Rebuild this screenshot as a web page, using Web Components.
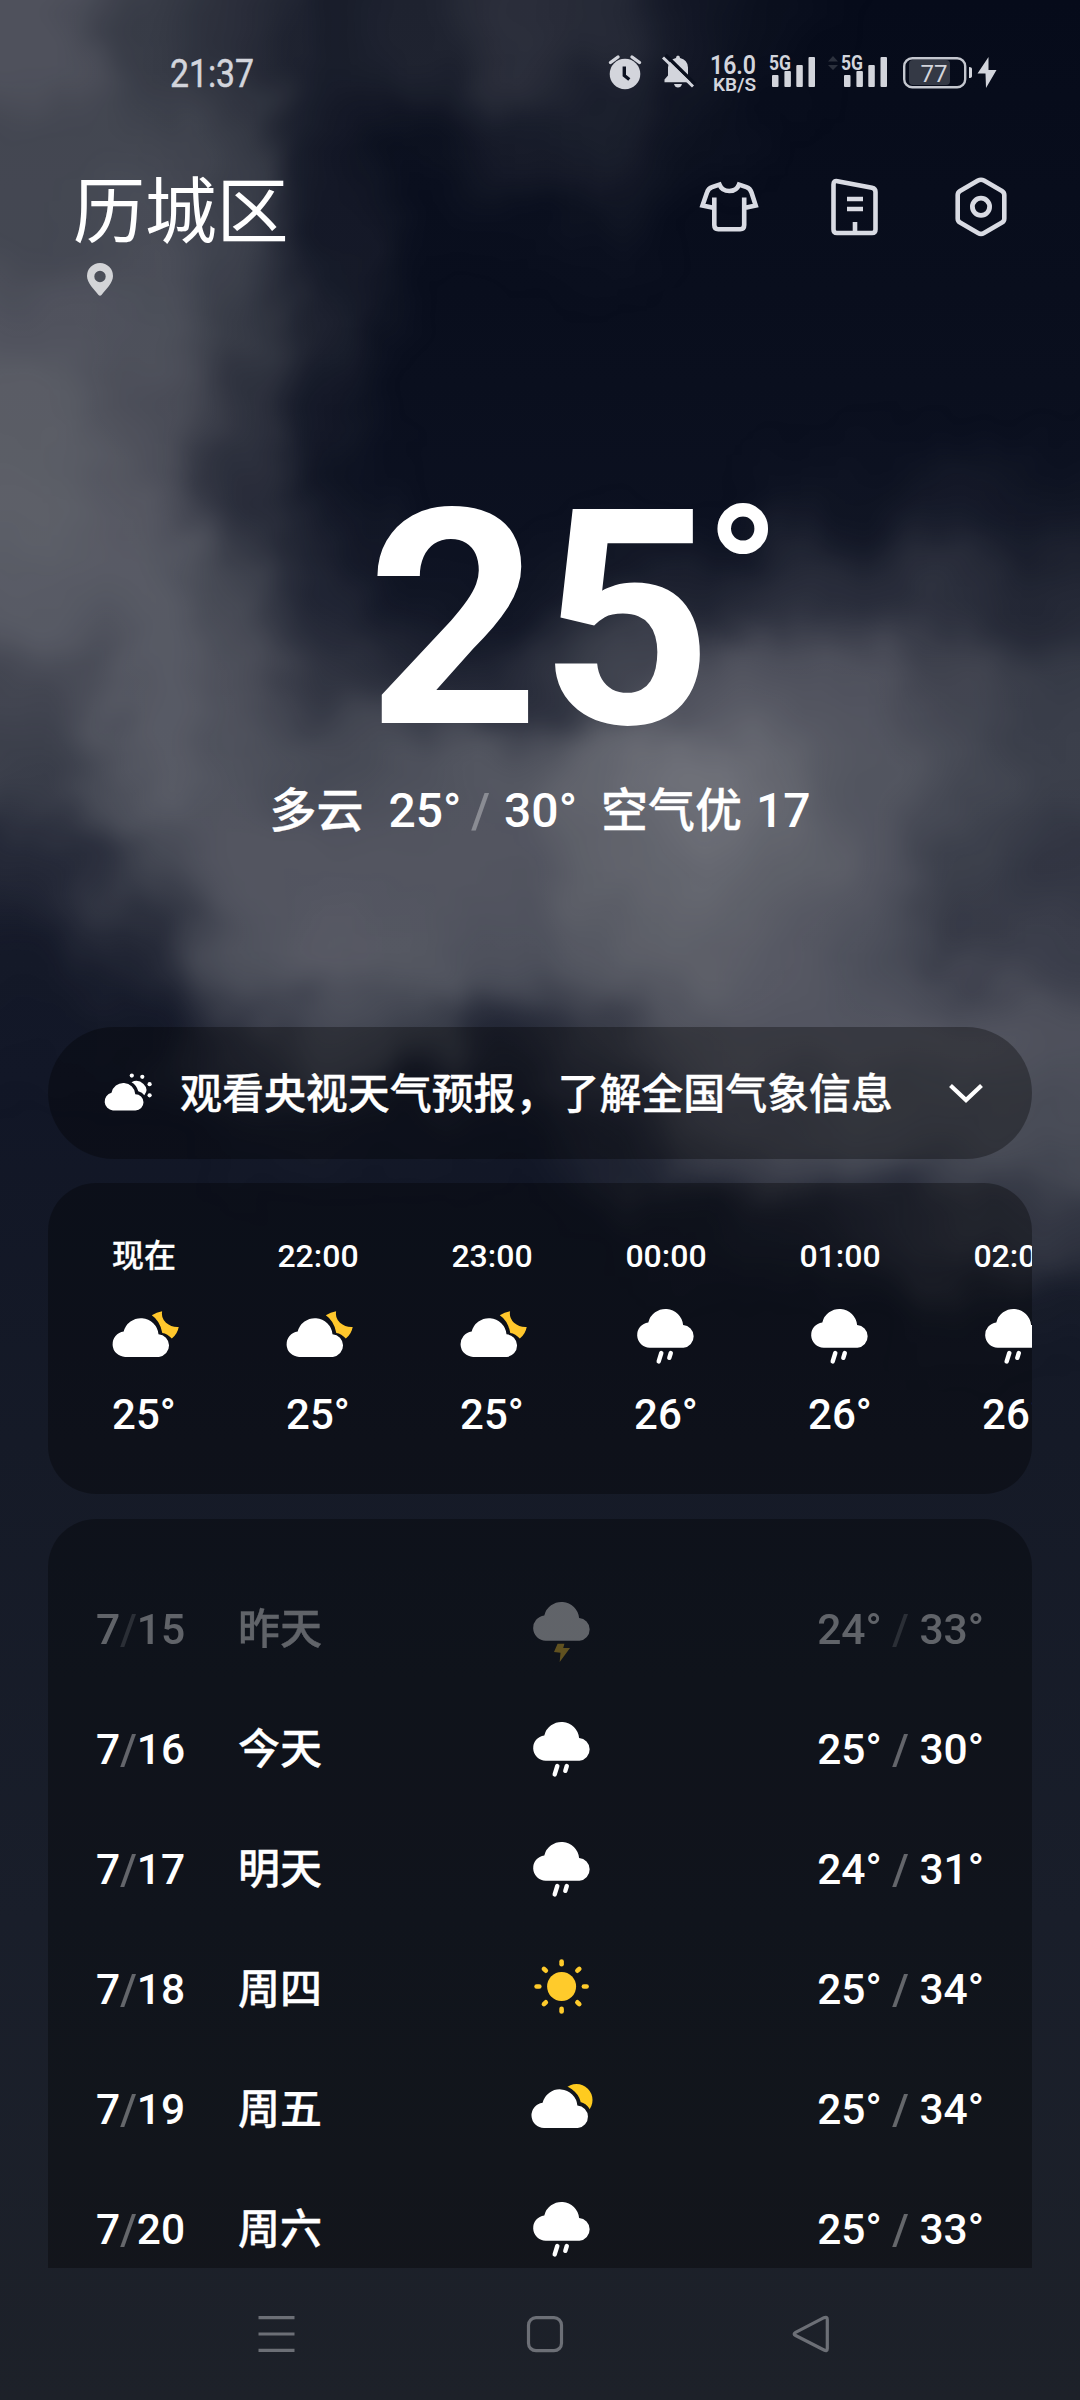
<!DOCTYPE html>
<html lang="zh-CN">
<head>
<meta charset="utf-8">
<title>历城区 天气</title>
<style>
html,body{margin:0;padding:0;background:#0a0f1e}
body{width:1080px;height:2400px;overflow:hidden;font-family:Roboto,"Noto Sans CJK SC",sans-serif;color:#fff;font-weight:500}
</style>
</head>
<body>
<weather-app>
  <status-bar time="21:37" speed="16.0" unit="KB/S" battery="77"></status-bar>
  <city-header>历城区</city-header>
  <current-weather temp="25" sky="多云" low="25°" high="30°" air="空气优" aqi="17"></current-weather>
  <forecast-banner>观看央视天气预报，了解全国气象信息</forecast-banner>
  <hourly-forecast>
    <hour-cell icon="moon" temp="25°" zh>现在</hour-cell>
    <hour-cell icon="moon" temp="25°">22:00</hour-cell>
    <hour-cell icon="moon" temp="25°">23:00</hour-cell>
    <hour-cell icon="rain" temp="26°">00:00</hour-cell>
    <hour-cell icon="rain" temp="26°">01:00</hour-cell>
    <hour-cell icon="rain" temp="26°">02:00</hour-cell>
  </hourly-forecast>
  <daily-forecast>
    <day-row month="7" day="15" icon="thunder" low="24°" high="33°" past>昨天</day-row>
    <day-row month="7" day="16" icon="rain" low="25°" high="30°">今天</day-row>
    <day-row month="7" day="17" icon="rain" low="24°" high="31°">明天</day-row>
    <day-row month="7" day="18" icon="sun" low="25°" high="34°">周四</day-row>
    <day-row month="7" day="19" icon="partly" low="25°" high="34°">周五</day-row>
    <day-row month="7" day="20" icon="rain" low="25°" high="33°">周六</day-row>
  </daily-forecast>
  <nav-bar slot="nav"></nav-bar>
</weather-app>
<script>
const define = (name, render) => customElements.define(name, class extends HTMLElement {
  constructor() { super(); this.attachShadow({ mode: 'open' }); }
  connectedCallback() { this.shadowRoot.innerHTML = render(n => this.getAttribute(n) ?? ''); }
});

// Cloud density in tenths, one value per 90px cell of the sky.
const density = [
  [6, 4, 3, 1.5, 2, 3, 2.6, 1, .4, 0, 0, 0],
  [5, 5, 4, 1, .3, 1.2, 1.6, .5, 0, 0, 0, 0],
  [5, 5.5, 4.4, 1, .1, .1, .2, 0, 0, 0, 0, 0],
  [6, 5.8, 4, 1.6, 0, 0, 0, 0, 0, 0, 0, 0],
  [6.8, 5.6, 3, .8, 0, 0, 0, 0, 0, 0, 0, 0],
  [7, 6.4, 2.6, .3, 0, 0, 0, 0, .2, .4, .8, .5],
  [6.6, 6.6, 5, 1.8, .3, .3, .6, 1.4, 2.4, 2.4, 2.6, 2],
  [4.6, 6.6, 5.6, 3, 1.6, 2.4, 4, 6, 6, 6, 4.6, 3.6],
  [4, 6.6, 5.8, 5, 5.8, 6.2, 7.4, 8.6, 7.6, 6.2, 5, 4],
  [1.8, 4.8, 6, 6, 6, 6, 7, 7.6, 7, 6, 4, 3],
  [.4, 1.6, 5.8, 6.4, 6.2, 5.4, 6.2, 7, 6.4, 5.4, 3.4, 3.8],
  [.2, .3, 2.6, 4.4, 4, 1.4, 3.4, 5.6, 6, 6, 6, 5.6],
  [0, 0, .3, .3, .2, .1, 1.2, 3.4, 4.6, 5, 5, 5],
  [0, 0, 0, 0, 0, 0, 0, .3, .8, 1.8, 2.8, 2.8],
  [0, 0, 0, 0, 0, 0, 0, 0, 0, 0, .1, .3]
];
const cells = [];
for (let r = -1; r < density.length; r++) for (let c = -1; c <= 12; c++) {
  const v = density[Math.max(r, 0)][Math.min(Math.max(c, 0), 11)];
  if (v) cells.push(`<path d="M${c * 90} ${r * 90}h90v90h-90z" fill-opacity="${(v / 10).toFixed(2)}"/>`);
}
define('cloud-sky', () => `
<style>:host{display:block;width:1080px;height:2400px}svg{display:block}</style>
<svg width="1080" height="2400" viewBox="0 0 1080 2400">
  <defs>
    <linearGradient id="night" x1="0" y1="0" x2="0" y2="1">
      <stop offset="0" stop-color="#060b1a"/><stop offset=".16" stop-color="#0a0f1e"/>
      <stop offset=".3" stop-color="#0e1323"/><stop offset=".45" stop-color="#111626"/>
      <stop offset=".6" stop-color="#151a27"/><stop offset=".8" stop-color="#191e2a"/>
      <stop offset="1" stop-color="#1d2129"/>
    </linearGradient>
    <filter id="soft" filterUnits="userSpaceOnUse" x="-90" y="-90" width="1260" height="1530" color-interpolation-filters="sRGB">
      <feGaussianBlur stdDeviation="24" result="b"/>
      <feTurbulence type="fractalNoise" baseFrequency=".009" numOctaves="3" seed="7" result="n"/>
      <feDisplacementMap in="b" in2="n" scale="100" xChannelSelector="R" yChannelSelector="G"/>
      <feGaussianBlur stdDeviation="7"/>
    </filter>
  </defs>
  <rect width="1080" height="2400" fill="url(#night)"/>
  <g filter="url(#soft)" fill="#808188" shape-rendering="crispEdges"><g transform="translate(14 8)">${cells.join('')}</g></g>
</svg>`);

define('weather-app', () => `
<style>
:host{display:grid;grid-template-columns:1080px;width:1080px;height:2400px;overflow:hidden}
cloud-sky,.page{grid-area:1/1}
.page{z-index:1;display:flex;flex-direction:column;height:2400px;min-width:0}
.scroll{height:2268px;overflow:hidden;display:flex;flex-direction:column}
</style>
<cloud-sky></cloud-sky>
<div class="page"><div class="scroll"><slot></slot></div><slot name="nav"></slot></div>`);

const bars = `<g fill="#d3d5dc"><rect x="3" y="22" width="6.5" height="12" rx="1"/><rect x="15.4" y="18" width="6.5" height="16" rx="1"/><rect x="27.3" y="12" width="6.5" height="22" rx="1"/><rect x="39.5" y="4" width="6.5" height="30" rx="1"/></g>
<text x="0" y="17.3" font-size="21" font-weight="700" textLength="22" lengthAdjust="spacingAndGlyphs">5G</text>`;
define('status-bar', a => `
<style>
:host{display:flex;height:146px;box-sizing:border-box;padding:53px 0 0 170px;align-items:flex-start;flex:none}
svg{display:block;flex:none;overflow:visible;fill:#d3d5dc;font-family:Roboto,sans-serif}
</style>
<svg width="86" height="40"><text x="0" y="34" font-size="38" font-weight="400" stroke="#d3d5dc" stroke-width=".5" textLength="84" lengthAdjust="spacingAndGlyphs">${a('time')}</text></svg>
<svg style="margin-left:353px" width="34" height="40"><circle cx="16" cy="21" r="15.3"/><path d="M1.500 9.500 9 4M30.500 9.500 23 4" stroke="#d3d5dc" stroke-width="3.400" stroke-linecap="round"/><path d="M15.300 13.500v9l5 4" fill="none" stroke="#0c1120" stroke-width="3.400"/></svg>
<svg style="margin-left:19px" width="34" height="40"><path d="M16 2.500q2 0 2 2.500 7.500 1.500 8 9.500v8l3.500 4v2.800H2.500v-2.800l3.500-4v-8q.5-8 8-9.500 0-2.500 2-2.500M12 31h8q-1 3.500-4 3.500t-4-3.500"/><path d="M3.500 2 33 31" stroke="#0a0f1d" stroke-width="3.500"/><path d="M1 4.500 31 33.500" stroke="#d3d5dc" stroke-width="3"/></svg>
<svg style="margin-left:14px" width="46" height="40"><text x="0" y="20.700" font-size="26" font-weight="600" textLength="46" lengthAdjust="spacingAndGlyphs">${a('speed')}</text><text x="3" y="37.700" font-size="18.500" font-weight="600" textLength="43" lengthAdjust="spacingAndGlyphs">${a('unit')}</text></svg>
<svg style="margin-left:13px" width="47" height="40">${bars}</svg>
<svg style="margin-left:12px" width="10" height="40"><path d="M0 8.500 5 3l5 5.500zM0 12l5 5 5-5z" fill="#2c313d"/></svg>
<svg style="margin-left:3px" width="47" height="40">${bars}</svg>
<svg style="margin-left:15px" width="68" height="40"><rect x="6" y="7" width="41" height="25" rx="4" fill="#343945"/><rect x="1.200" y="5.200" width="61" height="29" rx="8" fill="none" stroke="#c4c7cf" stroke-width="2.400"/><path d="M66 14q3 0 3 2v7q0 2-3 2z"/><text x="17.500" y="28.500" font-size="24" font-weight="400" textLength="27" lengthAdjust="spacingAndGlyphs">${a('battery')}</text></svg>
<svg style="margin-left:6px" width="20" height="40"><path d="M11.500 4 .5 20.500h8L9 35l10.500-18H11.500z"/></svg>`);

define('city-header', () => `
<style>
:host{display:flex;justify-content:space-between;align-items:flex-start;height:318px;padding:0 69px 0 73px;box-sizing:border-box;flex:none}
.place{display:flex;flex-direction:column;align-items:flex-start}
.name{font-size:72px;font-weight:400;line-height:100px;margin-top:17px;letter-spacing:-.3px}
.pin{margin:0 0 0 14px}
.tools{display:flex;gap:66px;margin-top:31px}
svg{display:block;overflow:visible}
.tools svg{fill:none;stroke:#d9dbe3;stroke-width:4.600;stroke-linejoin:round}
</style>
<div class="place"><div class="name"><slot></slot></div>
<svg class="pin" width="26" height="33" viewBox="0 0 26 33"><path fill="#d3d4d7" fill-rule="evenodd" d="M13 0a13 13 0 0 1 13 13C26 20 19 26 14.500 32q-1.500 1.500-3 0C7 26 0 20 0 13A13 13 0 0 1 13 0m0 7.800a5.700 5.700 0 1 0 0 11.400 5.700 5.700 0 0 0 0-11.400"/></svg></div>
<div class="tools">
<svg width="60" height="60"><path stroke-linejoin="miter" d="M15.300 20.500V48q0 4.200 4 4.200H41.200q4 0 4-4.200V20.500M15.300 31 3.500 28.500 8 15.500Q9.200 11.600 13 10.200L20.500 7.600Q23 14 30.300 14T40 7.600L47.500 10.200Q51.300 11.600 52.500 15.500L56.700 28.500 45.200 31"/></svg>
<svg width="60" height="60"><path d="M8.500 7.500Q8.500 3.400 12.500 4.200L47 10.800Q50.500 11.500 50.500 15V52.500Q50.500 56 47 56H12Q8.500 56 8.500 52.500ZM22 22h16M22 32h16M30 45v11"/></svg>
<svg width="60" height="60"><path d="M27 3.600Q30 1.900 33 3.600L51 14Q53.300 15.400 53.300 18V41.600Q53.300 44.300 51 45.600L33 56Q30 57.700 27 56L9 45.600Q6.700 44.300 6.700 41.600V18Q6.700 15.400 9 14Z"/><circle cx="30" cy="29.800" r="8.600" stroke-width="4.800"/></svg>
</div>`);

define('current-weather', a => `
<style>
:host{display:flex;flex-direction:column;align-items:center;height:563px;flex:none}
.big{display:flex;align-items:flex-start;align-self:flex-start;font-weight:700;font-size:301px;line-height:300px;margin:6px 0 0 367px}
.deg{font-size:192px;line-height:192px;margin:10px 0 0 -7px}
.row{display:flex;font-size:48px;line-height:60px;margin-top:11px}
.zh{font-size:47px;-webkit-text-stroke:.3px}
i{font-style:normal;opacity:.32;margin:0 14px 0 10px}
</style>
<div class="big"><span>${a('temp')}</span><span class="deg">°</span></div>
<div class="row"><span class="zh">${a('sky')}</span><span style="margin-left:25px">${a('low')}</span><i>/</i><span>${a('high')}</span><span class="zh" style="margin-left:24px">${a('air')}</span><span style="margin-left:14px">${a('aqi')}</span></div>`);

define('forecast-banner', () => `
<style>
:host{display:flex;align-items:center;height:132px;margin:0 48px;padding:0 48px 0 56px;box-sizing:border-box;border-radius:66px;background:rgba(0,0,0,.32);flex:none}
span{font-size:42px;line-height:60px;margin:4px 0 0 28px;letter-spacing:-.06px;white-space:nowrap;-webkit-text-stroke:.3px}
svg{display:block;overflow:visible;flex:none}
.chev{margin-left:auto}
</style>
<svg width="48" height="40" fill="#fff"><path d="M8.900 37.500A9 9 0 0 1 7.500 19.800 12 12 0 0 1 31.300 21.300 8 8 0 0 1 31.500 37.500Z"/><path d="M27.500 9.200Q34 5.600 39.500 11T40.300 22.300Q38.300 19 34.300 18.200 32.500 12 27.500 9.200Z"/><circle cx="27.800" cy="2.600" r="2.100"/><circle cx="38.300" cy="3.800" r="2.100"/><circle cx="45.600" cy="11.200" r="2.100"/><circle cx="45.600" cy="22.300" r="2.100"/></svg>
<span><slot></slot></span>
<svg class="chev" width="36" height="22"><path d="M2.500 3.500 18 18 33.500 3.500" fill="none" stroke="#fff" stroke-width="4.200"/></svg>`);

const cloud = 'M23.700 51.700A12.700 12.700 0 0 1 22.300 26.400 17.700 17.700 0 0 1 57.100 29 11.400 11.400 0 0 1 57.500 51.700Z';
const icons = {
  rain: `<path d="${cloud}"/><path d="M35.300 57 32.700 65.400M44.800 57 43.300 61.800" stroke="#fff" stroke-width="4.400" stroke-linecap="round"/>`,
  thunder: `<path d="${cloud}"/><path fill="#ffcb2b" d="M35.600 54.700h6.800L41.200 59H48L37.700 73l.8-9.300L32 63z"/>`,
  moon: `<path transform="translate(-2.600 9.200)" d="${cloud}"/><path transform="translate(-1 .3)" fill="#ffc72c" d="M48.800 19Q53.500 15.800 59.100 15 57.800 21.500 63 26.500 68.500 31.200 75.700 30.700 74.600 37.500 68.800 42.300 64.500 37.300 59.300 36.600 57 24.500 48.800 19Z"/>`,
  sun: `<g fill="#ffcb2b" stroke="#ffcb2b"><circle cx="39.600" cy="37.500" r="14.500" stroke="none"/><g stroke-width="4.600" stroke-linecap="round">${[0,45,90,135,180,225,270,315].map(r => `<path transform="rotate(${r} 39.600 37.500)" d="M39.600 12.500v2.700"/>`).join('')}</g></g>`,
  partly: `<mask id="m"><path fill="#fff" d="M0 0h80v80H0z"/><path transform="translate(-1.700 7.400)" stroke="#000" stroke-width="7.600" fill="#000" d="${cloud}"/></mask><circle cx="54.500" cy="31" r="16" fill="#ffcb1f" mask="url(#m)"/><path transform="translate(-1.700 7.400)" d="${cloud}"/>`
};
define('weather-icon', a => `
<style>:host{display:block;width:80px;height:80px;flex:none}svg{display:block}</style>
<svg width="80" height="80" fill="#fff">${icons[a('name')]}</svg>`);

define('hourly-forecast', () => `
<style>:host{display:flex;height:311px;margin:24px 48px 0;padding:52px 0 0 9px;box-sizing:border-box;border-radius:48px;background:rgba(0,0,0,.32);overflow:hidden;flex:none}</style><slot></slot>`);

define('hour-cell', a => `
<style>:host{display:flex;flex-direction:column;align-items:center;width:174px;flex:none}
:host([zh]) .t{-webkit-text-stroke:.3px}
.t{font-size:32px;line-height:42px;height:42px}.d{font-size:42px;line-height:50px;margin-top:14px}weather-icon{margin-top:19px}</style>
<div class="t"><slot></slot></div><weather-icon name="${a('icon')}"></weather-icon><div class="d">${a('temp')}</div>`);

define('daily-forecast', () => `
<style>:host{display:flex;flex-direction:column;height:900px;margin:25px 48px 0;padding:50px 48px 0 48px;box-sizing:border-box;border-radius:48px;background:rgba(0,0,0,.32);flex:none}</style><slot></slot>`);

define('day-row', a => `
<style>
:host{display:grid;grid-template-columns:142px 284px 80px 1fr;align-items:center;height:120px;flex:none;font-size:42.500px;line-height:56px}
:host([past]){opacity:.34}
i{font-style:normal;opacity:.35}
.date,.deg{padding-top:1px}
.deg{text-align:right;white-space:pre}
.name{font-size:42px;padding-top:2px;-webkit-text-stroke:.3px}
</style>
<div class="date">${a('month')}<i>/</i>${a('day')}</div><div class="name"><slot></slot></div><weather-icon name="${a('icon')}"></weather-icon><div class="deg">${a('low')}<i> / </i>${a('high')}</div>`);

define('nav-bar', () => `
<style>:host{display:flex;align-items:center;height:132px;padding-left:257px;gap:228px;box-sizing:border-box}svg{display:block;overflow:visible;fill:none;stroke:#6c6f76;stroke-width:3.200;stroke-linejoin:round}</style>
<svg width="40" height="40"><path d="M1.500 3.700h36M1.500 20h36M1.500 36.300h36"/></svg>
<svg width="40" height="40"><rect x="3.500" y="3.700" width="33" height="33" rx="7.500"/></svg>
<svg width="40" height="40"><path d="M2.600 21.500Q-.3 20 2.600 18.300L31 3.700Q34.300 2.200 34.300 5.500V34.500Q34.300 37.800 31 36Z"/></svg>`);
</script>
</body>
</html>
